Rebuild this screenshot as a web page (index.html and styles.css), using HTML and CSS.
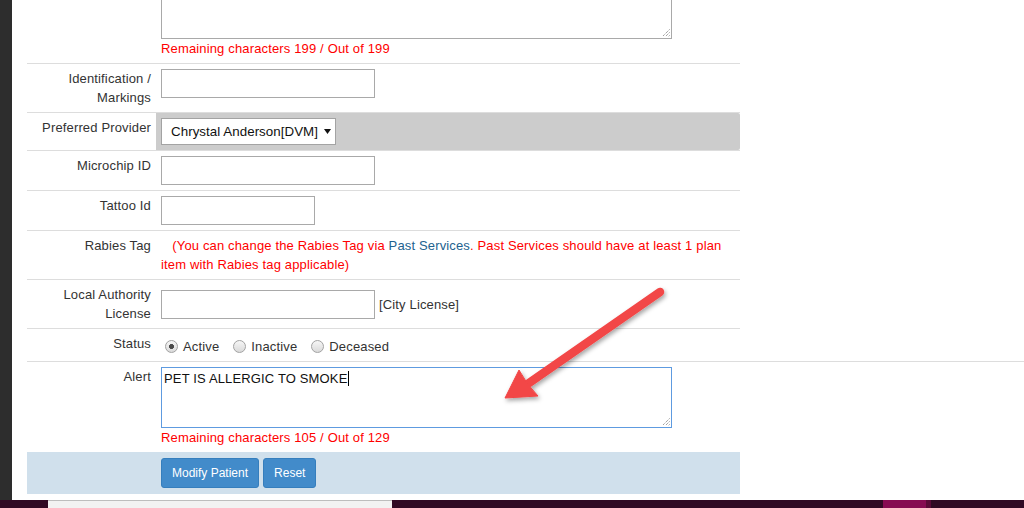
FILE: index.html
```html
<!DOCTYPE html>
<html lang="en">
<head>
<meta charset="utf-8">
<title>Modify Patient</title>
<link rel="stylesheet" href="styles.css">
</head>
<body>
<div class="screen">
  <div class="main">
    <div class="sidebar"></div>
    <div class="content">
      <form class="form">
        <div class="row first">
          <div class="label"></div>
          <div class="value">
            <div class="textarea">
              <svg class="grip" width="9" height="9" viewBox="0 0 9 9"><path d="M8.5 1.5 L1.5 8.5 M8.5 4.5 L4.5 8.5 M8.5 7.5 L7.5 8.5" stroke="#777" stroke-width="1" stroke-dasharray="1 1" fill="none"/></svg>
            </div>
            <div class="remaining">Remaining characters 199 / Out of 199</div>
          </div>
        </div>

        <div class="row">
          <div class="label">Identification / Markings</div>
          <div class="value"><input class="text w214" type="text"></div>
        </div>

        <div class="row">
          <div class="label">Preferred Provider</div>
          <div class="value shaded">
            <div class="select">
              <span class="select-text">Chrystal Anderson[DVM]</span>
              <svg class="caret-down" width="7" height="5" viewBox="0 0 7 5"><path d="M0 0 H7 L3.5 5 Z" fill="#111"/></svg>
            </div>
          </div>
        </div>

        <div class="row">
          <div class="label">Microchip ID</div>
          <div class="value"><input class="text w214" type="text"></div>
        </div>

        <div class="row">
          <div class="label">Tattoo Id</div>
          <div class="value"><input class="text w154" type="text"></div>
        </div>

        <div class="row">
          <div class="label">Rabies Tag</div>
          <div class="value rabies">&nbsp;&nbsp;&nbsp;(You can change the Rabies Tag via <a class="link" href="#">Past Services</a>. Past Services should have at least 1 plan<br>item with Rabies tag applicable)</div>
        </div>

        <div class="row">
          <div class="label">Local Authority License</div>
          <div class="value inline">
            <input class="text w214" type="text">
            <span>[City License]</span>
          </div>
        </div>

        <div class="row">
          <div class="label">Status</div>
          <div class="value">
            <div class="radios">
              <label class="opt"><input type="radio" name="status" checked>Active</label>
              <label class="opt"><input type="radio" name="status">Inactive</label>
              <label class="opt"><input type="radio" name="status">Deceased</label>
            </div>
          </div>
        </div>

        <div class="separator"></div>

        <div class="row alert">
          <div class="label">Alert</div>
          <div class="value">
            <div class="textarea focused">PET IS ALLERGIC TO SMOKE<span class="caret"></span>
              <svg class="grip" width="9" height="9" viewBox="0 0 9 9"><path d="M8.5 1.5 L1.5 8.5 M8.5 4.5 L4.5 8.5 M8.5 7.5 L7.5 8.5" stroke="#777" stroke-width="1" stroke-dasharray="1 1" fill="none"/></svg>
            </div>
            <div class="remaining">Remaining characters 105 / Out of 129</div>
          </div>
        </div>

        <div class="actions">
          <button class="btn" type="button">Modify Patient</button>
          <button class="btn" type="button">Reset</button>
        </div>
      </form>
    </div>
  </div>

  <div class="taskbar">
    <div class="tb-window"></div>
    <div class="tb-active"></div>
    <div class="tb-edge"></div>
  </div>

  <svg class="annotation" width="1024" height="508" viewBox="0 0 1024 508">
    <defs>
      <filter id="shadow" x="-20%" y="-20%" width="140%" height="140%">
        <feDropShadow dx="1.5" dy="2.5" stdDeviation="2" flood-color="#000" flood-opacity="0.35"/>
      </filter>
    </defs>
    <g filter="url(#shadow)" fill="#f24646" stroke="#f24646">
      <path d="M660 292 L529 383" stroke-width="8.5" stroke-linecap="round" fill="none"/>
      <path d="M505 398 L519 370 Q527 385 538 396 Z" stroke-width="1" stroke-linejoin="round"/>
    </g>
  </svg>
</div>
</body>
</html>
```

FILE: styles.css
```css
html, body {
  margin: 0;
  padding: 0;
}

body {
  font-family: "Liberation Sans", Arial, sans-serif;
  font-size: 13px;
  line-height: 19px;
  letter-spacing: 0.15px;
  color: #333;
  background: #fff;
  overflow: hidden;
}

.screen {
  position: relative;
  width: 1024px;
  height: 508px;
  display: flex;
  flex-direction: column;
  overflow: hidden;
}

.main {
  height: 500px;
  display: flex;
  flex-shrink: 0;
}

.sidebar {
  width: 12px;
  flex-shrink: 0;
  background: #2d2d2d;
}

.content {
  flex: 1;
  padding-left: 15px;
  overflow: hidden;
  background: #fff;
}

.form {
  margin: 0;
  display: flex;
  flex-direction: column;
  align-items: flex-start;
}

.row {
  display: flex;
  width: 713px;
  border-top: 1px solid #dddddd;
}

.row.first {
  border-top: none;
  margin-top: -27px;
}

.row.alert {
  border-top: none;
}

.separator {
  align-self: stretch;
  height: 1px;
  background: #dddddd;
}

.label {
  width: 129px;
  flex-shrink: 0;
  box-sizing: border-box;
  padding: 5px;
  text-align: right;
  color: #333;
}

.value {
  flex: 1;
  padding: 5px;
}

.value.shaded {
  background: #cccccc;
  border-radius: 0 2px 2px 0;
}

.value.inline {
  display: flex;
  align-items: center;
  gap: 4px;
}

.text {
  display: block;
  box-sizing: border-box;
  height: 29px;
  margin: 0;
  padding: 2px 4px;
  border: 1px solid #a9a9a9;
  background: #fff;
  font: inherit;
}

.w214 { width: 214px; }
.w154 { width: 154px; }

.textarea {
  position: relative;
  box-sizing: border-box;
  width: 511px;
  height: 61px;
  padding: 1px 2px;
  border: 1px solid #a9a9a9;
  background: #fff;
  color: #111;
}

.textarea.focused {
  border-color: #5e9be0;
}

.caret {
  display: inline-block;
  width: 0;
  height: 15px;
  border-left: 1px solid #000;
  vertical-align: -3px;
}

.grip {
  position: absolute;
  right: 1px;
  bottom: 1px;
}

.remaining {
  color: #ff0000;
}

.select {
  display: flex;
  align-items: center;
  gap: 6px;
  box-sizing: border-box;
  width: 175px;
  height: 27px;
  padding: 0 0 0 9px;
  border: 1px solid #a3a3a3;
  background: #fff;
  font-size: 13.33px;
  letter-spacing: 0.05px;
  color: #111;
  white-space: nowrap;
  overflow: hidden;
}

.select-text {
  white-space: nowrap;
}

.caret-down {
  display: block;
  flex-shrink: 0;
}

.rabies {
  color: #ff0000;
}

.link {
  color: #22628f;
  text-decoration: none;
}

.radios {
  display: flex;
  align-items: center;
  height: 19px;
  padding-top: 3px;
}

.opt {
  display: flex;
  align-items: center;
  margin-right: 10px;
  color: #333;
}

.opt input {
  appearance: none;
  -webkit-appearance: none;
  box-sizing: border-box;
  width: 13px;
  height: 13px;
  margin: 0 5px 0 4px;
  border: 1px solid #a2a2a2;
  border-radius: 50%;
  background: linear-gradient(#f6f6f6, #dadada);
}

.opt input:checked {
  background: radial-gradient(circle, #4a4a4a 0 2.2px, transparent 2.8px), linear-gradient(#f6f6f6, #dadada);
}

.actions {
  box-sizing: border-box;
  width: 713px;
  height: 42px;
  padding: 6px 0 0 134px;
  background: #d0e0ec;
  display: flex;
  gap: 4px;
  align-items: flex-start;
}

.btn {
  height: 30px;
  padding: 0 10px;
  margin: 0;
  border: 1px solid #357ebd;
  border-radius: 3px;
  background: #428bca;
  color: #fff;
  font-family: "Liberation Sans", Arial, sans-serif;
  font-size: 12px;
  letter-spacing: 0;
  line-height: 28px;
}

.taskbar {
  height: 8px;
  flex-shrink: 0;
  display: flex;
  background: #300a24;
}

.tb-window {
  margin-left: 48px;
  width: 344px;
  box-sizing: border-box;
  border-top: 1px solid #bdbdbd;
  background: #f2f2f2;
}

.tb-active {
  margin-left: 491px;
  width: 43px;
  background: #870b52;
}

.tb-edge {
  width: 5px;
  background: #5a0a38;
}

.annotation {
  position: absolute;
  left: 0;
  top: 0;
  pointer-events: none;
}
```
